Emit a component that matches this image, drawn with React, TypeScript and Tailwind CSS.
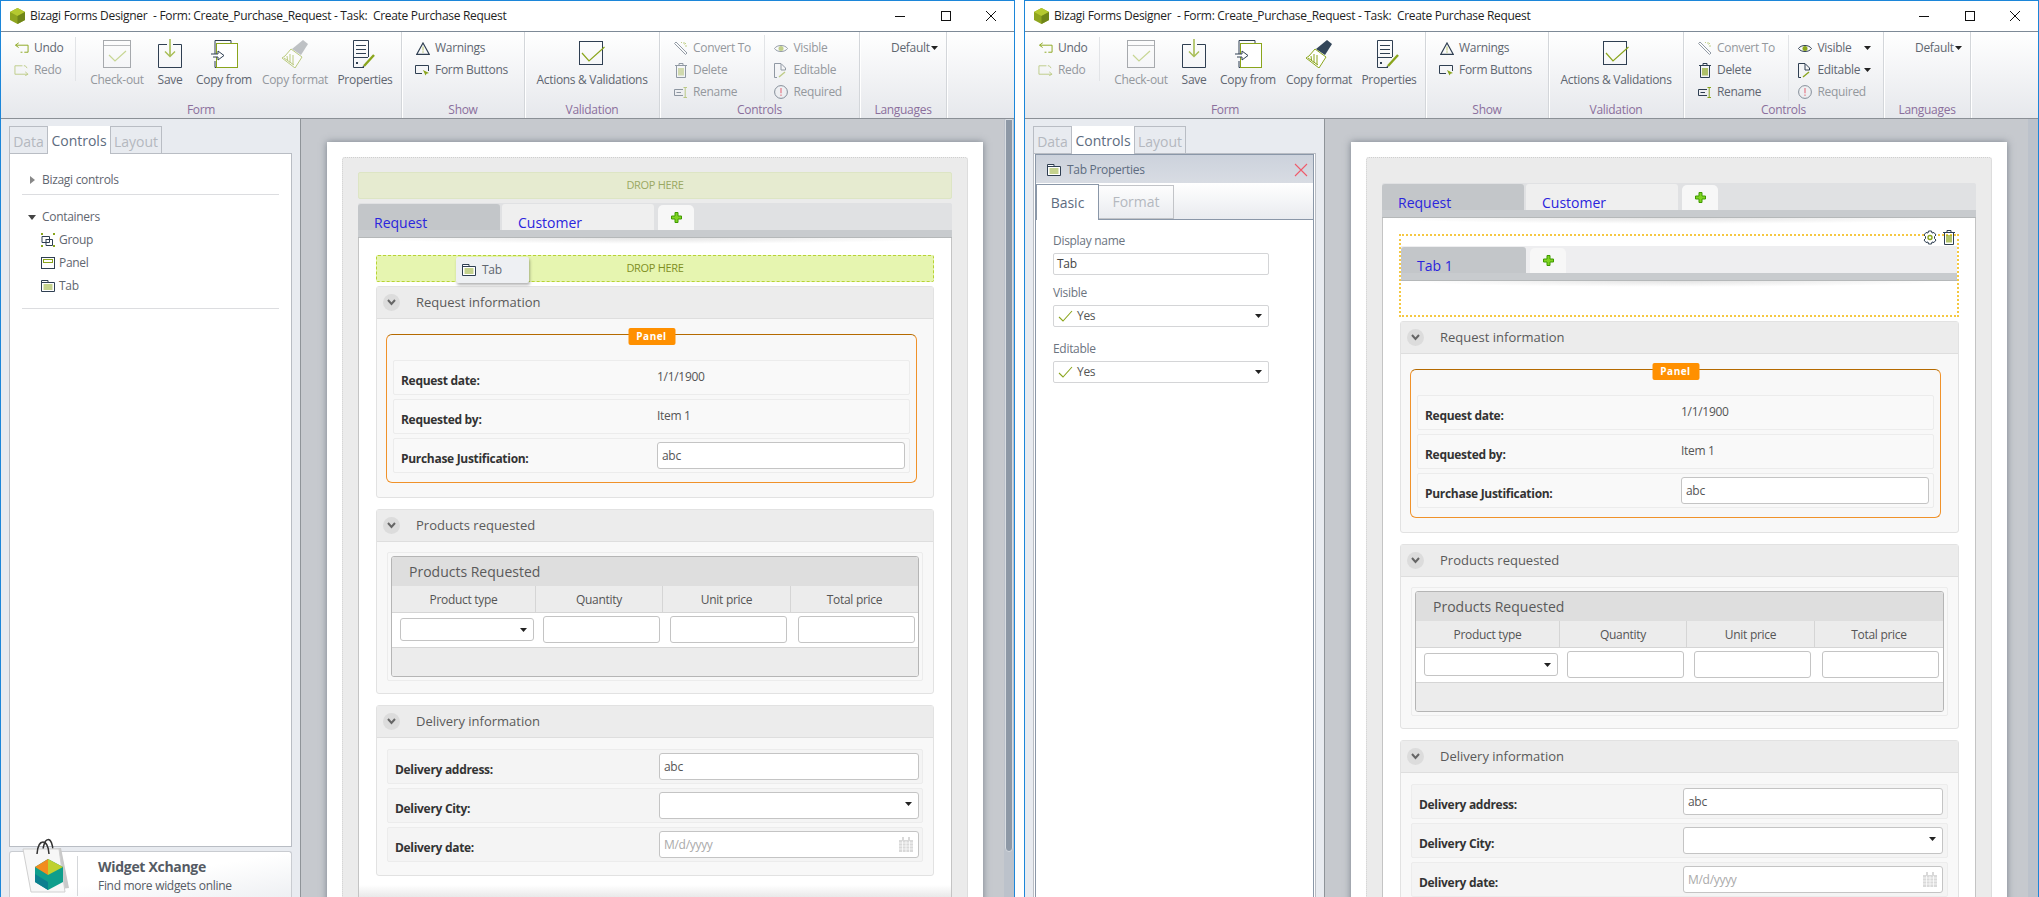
import type { ReactNode } from 'react';

const DARK = '#2f3f52';
const GREEN = '#8aa51c';

type IconProps = { off?: boolean };

const dim = (off?: boolean) => (off ? 'opacity-50' : '');

function Caret({ color = '#222' }: { color?: string }) {
  return (
    <svg width="7" height="4" viewBox="0 0 7 4" className="shrink-0">
      <path d="M0 0H7L3.5 4Z" fill={color} />
    </svg>
  );
}

function Logo() {
  return (
    <svg width="15" height="16" viewBox="0 0 15 16">
      <path d="M7.5 0L15 4V12L7.5 16L0 12V4Z" fill="#8fa51f" />
      <path d="M7.5 0L15 4L7.5 8L0 4Z" fill="#b5c92f" />
      <path d="M7.5 8L15 4V12L7.5 16Z" fill="#6f8518" />
    </svg>
  );
}

function UndoIcon({ off }: IconProps) {
  return (
    <svg width="16" height="12" viewBox="0 0 16 12" fill="none" className={dim(off)}>
      <path d="M2 3H15V10.5H11M9 10.5H7" stroke={GREEN} />
      <path d="M5 .5L1.5 3L5 5.5" stroke={GREEN} />
    </svg>
  );
}

function RedoIcon({ off }: IconProps) {
  return (
    <svg width="16" height="12" viewBox="0 0 16 12" fill="none" className={dim(off)}>
      <path d="M9 1.5H1V10.5H14" stroke={GREEN} />
      <path d="M10.5 1.5H12L14 4" stroke={GREEN} />
      <path d="M12 8L15 10.5L12 12" stroke={GREEN} />
    </svg>
  );
}

function CheckoutIcon() {
  return (
    <svg width="28" height="28" viewBox="0 0 28 28" fill="none">
      <rect x=".5" y=".5" width="27" height="27" stroke="#a6a9ad" />
      <path d="M1 5.5H27" stroke="#b8babd" />
      <path d="M6 15L12 21L23 11" stroke="#c7d694" strokeWidth="1.2" />
    </svg>
  );
}

function SaveIcon() {
  return (
    <svg width="24" height="29" viewBox="0 0 24 29" fill="none">
      <path d="M9 5.5H.5V28.5H23.5V5.5H15" stroke={DARK} />
      <path d="M12 0V17" stroke="#a7bd55" strokeWidth="1.6" />
      <path d="M7 12.5L12 17.5L17 12.5" stroke="#a7bd55" strokeWidth="1.4" />
    </svg>
  );
}

function CopyFromIcon() {
  return (
    <svg width="28" height="28" viewBox="0 0 28 28" fill="none">
      <path d="M5 15V.5H21V4M5 21V27.5H7" stroke={DARK} />
      <rect x="6.5" y="3.5" width="21" height="24" stroke={GREEN} fill="#fff" />
      <path d="M1 14H8V11L14 15.5L8 20V17H3" stroke={DARK} fill="#fff" />
    </svg>
  );
}

function BrushIcon({ off }: IconProps) {
  return (
    <svg width="28" height="28" viewBox="0 0 28 28" fill="none" className={off ? 'opacity-55' : ''}>
      <path d="M22 0L27 4L20 15L11 9Z" fill={off ? '#8d9298' : '#33465a'} />
      <path d="M10 9L21 17L14 28L1 18L4 16Z" fill="#fff" stroke={GREEN} />
      <path d="M3 18L13 25M6 16L6.5 20M9 14L9 22.5M12 15L12 24.5" stroke={GREEN} />
    </svg>
  );
}

function PropertiesIcon() {
  return (
    <svg width="24" height="28" viewBox="0 0 24 28" fill="none">
      <path d="M11 27.5H.5V.5H15.5V17" stroke={DARK} />
      <path d="M3 5.5H13M3 9.5H13M3 13.5H13M1 17.5H15" stroke={DARK} />
      <rect x="3" y="22" width="2" height="2" fill={DARK} />
      <path d="M11 26L21 15" stroke={GREEN} strokeWidth="2.4" />
      <path d="M9.5 27.5L10 25.5L11.5 27Z" fill={DARK} />
    </svg>
  );
}

function WarningIcon() {
  return (
    <svg width="14" height="13" viewBox="0 0 14 13" fill="none">
      <path d="M7 1L13.2 12.3H.8Z" stroke={DARK} strokeWidth="1.2" />
      <path d="M7 4.5V8.5" stroke="#b9c46a" />
      <rect x="6.5" y="9.5" width="1" height="1" fill={GREEN} />
    </svg>
  );
}

function FormButtonsIcon() {
  return (
    <svg width="15" height="11" viewBox="0 0 15 11" fill="none">
      <path d="M7 8.5H.5V.5H13.5V6" stroke={DARK} />
      <path d="M8 5L14 8L11.5 8.7L10.5 10.5Z" fill={GREEN} />
    </svg>
  );
}

function ActionsIcon() {
  return (
    <svg width="26" height="27" viewBox="0 0 26 27" fill="none">
      <rect x=".5" y=".5" width="23" height="23" stroke={DARK} />
      <path d="M3 12L10 20L25.5 6" stroke={GREEN} strokeWidth="1.2" />
    </svg>
  );
}

function WandIcon() {
  return (
    <svg width="14" height="14" viewBox="0 0 14 14" fill="none" className="opacity-50">
      <path d="M2 1L13 12L11.5 13.5L.5 2.5Z" stroke={DARK} />
      <path d="M7 1L8 2M10 1V3M11 5H13M10.5 3.5L12 2" stroke={GREEN} />
    </svg>
  );
}

function TrashIcon({ off }: IconProps) {
  return (
    <svg width="14" height="15" viewBox="0 0 14 15" fill="none" className={dim(off)}>
      <path d="M1 2.5H13M5 2.5V.5H9V2.5M2.5 2.5V14.5H11.5V2.5" stroke={DARK} />
      <path d="M5 5V12.5M7 5V12.5M9 5V12.5" stroke={GREEN} strokeWidth="1.3" />
    </svg>
  );
}

function RenameIcon({ off }: IconProps) {
  return (
    <svg width="14" height="11" viewBox="0 0 14 11" fill="none" className={dim(off)}>
      <path d="M9 2.5H.5V8.5H9" stroke={DARK} />
      <path d="M2.5 5.5H7" stroke={DARK} />
      <path d="M9.5 .5H13M11.2 .5V10.5M9.5 10.5H13" stroke={GREEN} />
    </svg>
  );
}

function EyeIcon({ off }: IconProps) {
  return (
    <svg width="14" height="9" viewBox="0 0 14 9" fill="none" className={dim(off)}>
      <path d="M.5 4.5C3 .5 11 .5 13.5 4.5C11 8.5 3 8.5 .5 4.5Z" stroke={DARK} />
      <circle cx="7" cy="4.5" r="2.5" fill={GREEN} />
    </svg>
  );
}

function EditableIcon({ off }: IconProps) {
  return (
    <svg width="13" height="15" viewBox="0 0 13 15" fill="none" className={dim(off)}>
      <path d="M3 14.5H.5V.5H7L11.5 5V7H7V1" stroke={DARK} />
      <path d="M5 14L11 9" stroke={GREEN} strokeWidth="1.4" />
    </svg>
  );
}

function RequiredIcon() {
  return (
    <svg width="14" height="14" viewBox="0 0 14 14" fill="none" className="opacity-55">
      <circle cx="7" cy="7" r="6.4" stroke={DARK} />
      <path d="M7 3V8.2" stroke="#e0384c" strokeWidth="1.4" />
      <rect x="6.3" y="9.5" width="1.4" height="1.4" fill="#e0384c" />
    </svg>
  );
}

function GroupIcon() {
  return (
    <svg width="14" height="14" viewBox="0 0 14 14" fill="none">
      <path d="M1 3.5H8.5V9.5H1Z" stroke={DARK} />
      <path d="M5 6V12.5H11.5V6.5H5" stroke={DARK} />
      <path d="M0 0H2V2H0ZM12 0H14V2H12ZM0 12H2V14H0ZM12 12H14V14H12Z" fill={GREEN} />
    </svg>
  );
}

function PanelIcon() {
  return (
    <svg width="14" height="12" viewBox="0 0 14 12" fill="none">
      <rect x=".5" y=".5" width="13" height="11" stroke={DARK} />
      <rect x="2.5" y="2.5" width="9" height="3" stroke={GREEN} />
    </svg>
  );
}

function TabIcon() {
  return (
    <svg width="14" height="12" viewBox="0 0 14 12" fill="none">
      <path d="M.5 11.5V.5H7V2.5H13.5V11.5Z" stroke={DARK} fill="#fff" />
      <path d="M.5 2.5H7" stroke={DARK} />
      <path d="M2.5 5H11.5M2.5 7H11.5M2.5 9H11.5" stroke={GREEN} />
    </svg>
  );
}

function CalendarIcon() {
  return (
    <svg width="14" height="15" viewBox="0 0 14 15" fill="#d9d9d9">
      <path d="M0 3H14V15H0Z" />
      <path d="M3 0H5V4H3ZM9 0H11V4H9Z" />
      <path d="M0 6H14M0 9H14M0 12H14M3.5 4V15M7 4V15M10.5 4V15" stroke="#fff" strokeWidth=".7" />
    </svg>
  );
}

function PlusIcon() {
  return (
    <svg width="11" height="11" viewBox="0 0 11 11">
      <path d="M4 .5H7V4H10.5V7H7V10.5H4V7H.5V4H4Z" fill="#7ed321" stroke="#3f9a00" />
    </svg>
  );
}

function Chevron() {
  return (
    <span className="flex h-[17px] w-[17px] items-center justify-center rounded-full bg-[#dcdcdc]">
      <svg width="9" height="7" viewBox="0 0 9 7" fill="none">
        <path d="M1 1L4.5 5L8 1" stroke="#666" strokeWidth="2" />
      </svg>
    </span>
  );
}

function GearIcon() {
  return (
    <svg width="14" height="15" viewBox="0 0 14 15" fill="none">
      <path
        d="M5.5 1H8.5L9 3L11 2.5L13 5L11.5 6.5V8.5L13 10L11 12.5L9 12L8.5 14H5.5L5 12L3 12.5L1 10L2.5 8.5V6.5L1 5L3 2.5L5 3Z"
        stroke={DARK}
        fill="#fff"
      />
      <circle cx="7" cy="7.5" r="2" stroke={GREEN} strokeWidth="1.4" />
    </svg>
  );
}

function BagIcon() {
  return (
    <svg width="50" height="58" viewBox="0 0 50 58" fill="none">
      <path d="M22 16C22 0 32 -1 32 16" stroke="#333" strokeWidth="1.5" />
      <path d="M6 14L40 12L48 52L14 56Z" fill="#c9c9c9" />
      <path d="M2 13H38L44 56H10Z" fill="#f7f7f7" stroke="#d0d0d0" />
      <path d="M16 18C17 2 27 2 28 18" stroke="#333" strokeWidth="1.5" />
      <path d="M27 23L42 31V46L27 54L14 46V31Z" fill="#0e9e8c" />
      <path d="M27 23L14 31L27 39Z" fill="#f28c1e" />
      <path d="M27 23L42 31L27 39Z" fill="#bfd12f" />
      <path d="M14 38L27 46V54L14 46Z" fill="#0b7f8f" />
    </svg>
  );
}

function SmallBtn({ icon, label, off, caret }: { icon: ReactNode; label: string; off?: boolean; caret?: boolean }) {
  return (
    <div className="flex h-[22px] w-full items-center">
      <span className="flex w-[15px] shrink-0 justify-center">{icon}</span>
      <span className={`ml-[5px] whitespace-nowrap text-[12px] ${off ? 'text-[#94989d]' : 'text-[#5f6670]'}`}>{label}</span>
      {caret && (
        <span className="ml-auto">
          <Caret />
        </span>
      )}
    </div>
  );
}

function BigBtn({ icon, label, width, off }: { icon: ReactNode; label: string; width: string; off?: boolean }) {
  return (
    <div className={`flex flex-col items-center ${width}`}>
      <div className="flex h-[36px] items-end">{icon}</div>
      <span className={`mt-[4px] whitespace-nowrap text-[12px] leading-[16px] ${off ? 'text-[#94989d]' : 'text-[#5f6670]'}`}>{label}</span>
    </div>
  );
}

function RibbonGroup({ label, width, children }: { label: string; width: string; children: ReactNode }) {
  return (
    <div className={`flex shrink-0 flex-col border-r border-r-[#d3d6da] shadow-[1px_0_0_#fff] ${width}`}>
      <div className="flex h-[69px] shrink-0">{children}</div>
      <div className="text-center text-[12px] leading-[17px] text-[#8b6f9c]">{label}</div>
    </div>
  );
}

function Ribbon({ active }: { active: boolean }) {
  return (
    <div className="flex h-[88px] shrink-0 border-y border-t-[#7e8a97] border-b-[#8b9096] bg-gradient-to-b from-white to-[#e6e8ec]">
      <RibbonGroup label="Form" width="w-[401px]">
        <div className="mt-[5px] h-[44px] w-[75px] border-r border-r-[#e2e4e7] pl-[13px]">
          <SmallBtn icon={<UndoIcon />} label="Undo" />
          <SmallBtn icon={<RedoIcon off />} label="Redo" off />
        </div>
        <div className="flex pl-[6px]">
          <BigBtn icon={<CheckoutIcon />} label="Check-out" width="w-[70px]" off />
          <BigBtn icon={<SaveIcon />} label="Save" width="w-[36px]" />
          <BigBtn icon={<CopyFromIcon />} label="Copy from" width="w-[72px]" />
          <BigBtn icon={<BrushIcon off={!active} />} label="Copy format" width="w-[70px]" off={!active} />
          <BigBtn icon={<PropertiesIcon />} label="Properties" width="w-[70px]" />
        </div>
      </RibbonGroup>
      <RibbonGroup label="Show" width="w-[123px]">
        <div className="pl-[13px] pt-[5px]">
          <SmallBtn icon={<WarningIcon />} label="Warnings" />
          <SmallBtn icon={<FormButtonsIcon />} label="Form Buttons" />
        </div>
      </RibbonGroup>
      <RibbonGroup label="Validation" width="w-[135px]">
        <div className="flex w-full justify-center">
          <BigBtn icon={<ActionsIcon />} label="Actions & Validations" width="w-[114px]" />
        </div>
      </RibbonGroup>
      <RibbonGroup label="Controls" width="w-[200px]">
        <div className="w-[105px] pl-[13px] pt-[5px]">
          <SmallBtn icon={<WandIcon />} label="Convert To" off />
          <SmallBtn icon={<TrashIcon off={!active} />} label="Delete" off={!active} />
          <SmallBtn icon={<RenameIcon off={!active} />} label="Rename" off={!active} />
        </div>
        <div className="mt-[3px] h-[66px] w-[95px] border-l border-l-[#e2e4e7] pl-[8px] pr-[12px] pt-[2px]">
          <SmallBtn icon={<EyeIcon off={!active} />} label="Visible" off={!active} caret={active} />
          <SmallBtn icon={<EditableIcon off={!active} />} label="Editable" off={!active} caret={active} />
          <SmallBtn icon={<RequiredIcon />} label="Required" off />
        </div>
      </RibbonGroup>
      <RibbonGroup label="Languages" width="w-[87px]">
        <div className="flex h-[22px] items-center gap-[1px] pl-[31px] pt-[10px] text-[12px] text-[#5f6670]">
          Default
          <Caret />
        </div>
      </RibbonGroup>
    </div>
  );
}

function TitleBar() {
  return (
    <div className="flex h-[30px] shrink-0 items-center bg-white">
      <span className="ml-[9px] flex w-[20px] shrink-0">
        <Logo />
      </span>
      <span className="whitespace-pre text-[12px] text-[#1f1f1f]">Bizagi Forms Designer  - Form: Create_Purchase_Request - Task:  Create Purchase Request</span>
      <div className="ml-auto flex">
        <span className="flex h-[30px] w-[46px] items-center justify-center">
          <svg width="10" height="10" viewBox="0 0 10 10"><path d="M0 5.5H10" stroke="#111" /></svg>
        </span>
        <span className="flex h-[30px] w-[45px] items-center justify-center">
          <svg width="10" height="10" viewBox="0 0 10 10" fill="none"><rect x=".5" y=".5" width="9" height="9" stroke="#111" /></svg>
        </span>
        <span className="flex h-[30px] w-[46px] items-center justify-center">
          <svg width="10" height="10" viewBox="0 0 10 10" fill="none"><path d="M0 0L10 10M10 0L0 10" stroke="#111" /></svg>
        </span>
      </div>
    </div>
  );
}

function SideTabs() {
  return (
    <div className="flex h-[27px] shrink-0 text-[14px] leading-[29px] tracking-normal">
      <span className="w-[39px] border border-b-0 border-[#b9bdc4] text-center text-[#b4b8bf]">Data</span>
      <span className="z-10 -mb-px w-[62px] bg-white text-center text-[#5d6c80]">Controls</span>
      <span className="w-[52px] border border-b-0 border-[#b9bdc4] text-center text-[#b4b8bf]">Layout</span>
    </div>
  );
}

function ControlsTree() {
  return (
    <div className="flex flex-col text-[12px] text-[#5f6670]">
      <div className="mx-[12px] flex h-[41px] items-start border-b border-b-[#dcdde0] pl-[8px] pt-[17px]">
        <svg width="5" height="8" viewBox="0 0 5 8" className="mr-[7px] mt-[5px]"><path d="M0 0L5 4L0 8Z" fill="#888" /></svg>
        Bizagi controls
      </div>
      <div className="mx-[12px] border-b border-b-[#dcdde0] pb-[11px] pt-[12px]">
        <div className="mb-[1px] flex h-[20px] items-center pl-[6px]">
          <svg width="8" height="5" viewBox="0 0 8 5" className="mr-[6px]"><path d="M0 0H8L4 5Z" fill="#444" /></svg>
          Containers
        </div>
        {[
          { label: 'Group', icon: <GroupIcon /> },
          { label: 'Panel', icon: <PanelIcon /> },
          { label: 'Tab', icon: <TabIcon /> },
        ].map((item) => (
          <div key={item.label} className="flex h-[23px] items-center gap-[4px] pl-[19px]">
            <span className="flex w-[14px] justify-center">{item.icon}</span>
            {item.label}
          </div>
        ))}
      </div>
    </div>
  );
}

function WidgetXchange() {
  return (
    <div className="relative mt-[4px] flex h-[46px] shrink-0 rounded-t-[3px] border border-b-0 border-[#c9ccd1] bg-gradient-to-br from-white via-white to-[#eef0f3]">
      <span className="absolute -top-[16px] left-[11px]">
        <BagIcon />
      </span>
      <span className="ml-[67px] mt-[4px] h-[40px] border-l border-l-[#d5d7da]" />
      <div className="ml-[20px] flex flex-col pt-[5px] text-[#555b64]">
        <span className="text-[14px] font-bold leading-[20px]">Widget Xchange</span>
        <span className="text-[12px] leading-[17px]">Find more widgets online</span>
      </div>
    </div>
  );
}

function SelectBox({ value }: { value: string }) {
  return (
    <div className="flex h-[22px] w-[216px] items-center rounded-[2px] border border-[#d4d5d7] pl-[4px] pr-[6px] text-[12px] text-[#555]">
      <svg width="15" height="12" viewBox="0 0 15 12" fill="none" className="mr-[4px]">
        <path d="M1 7L5 11L14 1" stroke={GREEN} strokeWidth="1.1" />
      </svg>
      {value}
      <span className="ml-auto">
        <Caret />
      </span>
    </div>
  );
}

function TabProperties() {
  return (
    <div className="mx-[1px] flex min-h-0 flex-1 flex-col border-x border-t border-[#8a97a8] text-[12px]">
      <div className="flex h-[28px] shrink-0 items-center bg-gradient-to-b from-[#ccd2dc] to-[#d8dce3] pl-[11px] pt-[1px] text-[#5d6c80]">
        <TabIcon />
        <span className="ml-[6px]">Tab Properties</span>
        <svg width="14" height="14" viewBox="0 0 14 14" className="ml-auto mr-[5px]" fill="none">
          <path d="M1 1L13 13M13 1L1 13" stroke="#ef5a6a" strokeWidth="1.1" />
        </svg>
      </div>
      <div className="flex h-[37px] shrink-0 items-end border-b border-b-[#8a97a8] bg-gradient-to-b from-white to-[#e9ebef] text-[14px] tracking-normal">
        <span className="-mb-px h-[36px] w-[63px] border-x border-t border-[#8a97a8] bg-white text-center leading-[36px] text-[#5d6c80]">Basic</span>
        <span className="h-[34px] w-[75px] border-y border-r border-[#c2c4c8] text-center leading-[32px] text-[#b4b8bf]">Format</span>
      </div>
      <div className="flex flex-col pl-[17px] text-[#6c7480]">
        <span className="mt-[13px] leading-[16px]">Display name</span>
        <div className="mt-[4px] flex h-[22px] w-[216px] items-center rounded-[2px] border border-[#d4d5d7] pl-[3px] text-[#444]">Tab</div>
        <span className="mt-[10px] leading-[16px]">Visible</span>
        <div className="mt-[4px]"><SelectBox value="Yes" /></div>
        <span className="mt-[14px] leading-[16px]">Editable</span>
        <div className="mt-[4px]"><SelectBox value="Yes" /></div>
      </div>
    </div>
  );
}

function TextBox({ width, value, muted }: { width: string; value: string; muted?: boolean }) {
  return (
    <div className={`flex h-[27px] items-center rounded-[3px] border border-[#c4c4c4] bg-white px-[4px] text-[12px] ${width} ${muted ? 'text-[#aaa]' : 'text-[#555]'}`}>
      {value}
    </div>
  );
}

function DropHere({ children, soft }: { children?: ReactNode; soft?: boolean }) {
  return (
    <div
      className={`relative flex h-[27px] items-center justify-center rounded-[2px] border text-[11px] ${
        soft
          ? 'border-[#dde5c4] bg-[#e6ebd0] text-[#9aa862]'
          : 'border-dashed border-[#b8d334] bg-[#e6f5b0] text-[#7f8f1f]'
      }`}
    >
      DROP HERE
      {children}
    </div>
  );
}

function TabStrip({ tabs, first, small }: { tabs: string[]; first: string; small?: boolean }) {
  return (
    <div>
      <div className={`flex h-[27px] items-end gap-[2px] tracking-normal ${small ? 'bg-[#eeeef0]' : 'rounded-t-[2px] bg-[#e0e1e3]'}`}>
        {tabs.map((tab, i) => (
          <span
            key={tab}
            className={`h-[26px] rounded-t-[3px] text-[14px] leading-[37px] text-[#2a24dd] ${first} ${i === 0 ? 'bg-[#c3c6c9] pl-[16px]' : 'w-[152px] bg-[#efefef] pl-[16px]'}`}
          >
            {tab}
          </span>
        ))}
        <span className="ml-[2px] flex h-[25px] w-[36px] items-center justify-center rounded-t-[5px] bg-[#f7f7f7]">
          <PlusIcon />
        </span>
      </div>
      <div className="h-[8px] border-b border-b-[#b5b8b9] bg-[#c8cbce]" />
      <div className="relative -mb-[6px] h-[6px] bg-[radial-gradient(ellipse_at_top,#e4e4e4,transparent_70%)]" />
    </div>
  );
}

function Section({ title, children }: { title: string; children: ReactNode }) {
  return (
    <div className="rounded-[3px] border border-[#e2e2e2] bg-[#f8f8f8]">
      <div className="flex h-[32px] items-center gap-[16px] border-b border-b-[#dedede] bg-[#ececec] pl-[6px] text-[13px] tracking-normal text-[#5a5a5a]">
        <Chevron />
        {title}
      </div>
      {children}
    </div>
  );
}

function FieldRow({ label, offset, tone, children }: { label: string; offset: string; tone: string; children: ReactNode }) {
  return (
    <div className={`flex h-[35px] rounded-[2px] border border-[#ececec] ${tone}`}>
      <span className={`shrink-0 pl-[7px] pt-[11px] text-[12px] font-bold leading-[18px] text-[#333] ${offset}`}>{label}</span>
      {children}
    </div>
  );
}

function ReadOnlyValue({ value }: { value: string }) {
  return <span className="pt-[7px] text-[12px] leading-[18px] text-[#555]">{value}</span>;
}

function RequestInfo() {
  return (
    <Section title="Request information">
      <div className="relative mb-[14px] ml-[9px] mt-[15px] w-[531px] rounded-[6px] border border-[#f0922a] border-t-[#b56a00] px-[6px] pb-[9px] pt-[25px]">
        <span className="absolute -top-[7px] left-1/2 flex h-[17px] w-[47px] -translate-x-1/2 items-center justify-center rounded-[2px] bg-[#ff9000] text-[10px] font-bold tracking-[0.5px] text-white">
          Panel
        </span>
        <div className="flex flex-col gap-[4px]">
          <FieldRow label="Request date:" offset="w-[263px]" tone="bg-[#f9f9f9]"><ReadOnlyValue value="1/1/1900" /></FieldRow>
          <FieldRow label="Requested by:" offset="w-[263px]" tone="bg-[#f9f9f9]"><ReadOnlyValue value="Item 1" /></FieldRow>
          <FieldRow label="Purchase Justification:" offset="w-[263px]" tone="bg-[#f9f9f9]">
            <div className="pt-[3px]"><TextBox width="w-[248px]" value="abc" /></div>
          </FieldRow>
        </div>
      </div>
    </Section>
  );
}

function ProductsRequested() {
  const columns = ['Product type', 'Quantity', 'Unit price', 'Total price'];
  return (
    <Section title="Products requested">
      <div className="mx-[10px] mb-[12px] mt-[10px] rounded-[2px] border border-[#ececec] p-[3px]">
        <div className="overflow-hidden rounded-[3px] border border-[#b5b5b5]">
          <div className="flex h-[29px] items-center bg-[#dedede] pl-[17px] text-[14px] tracking-normal text-[#5a5a5a]">Products Requested</div>
          <div className="grid h-[27px] grid-cols-[144px_127px_128px_1fr] border-b border-b-[#d5d5d5] bg-[#ececec] text-[12px] text-[#555]">
            {columns.map((col, i) => (
              <span key={col} className={`text-center leading-[27px] ${i < 3 ? 'border-r border-r-[#d5d5d5]' : ''}`}>{col}</span>
            ))}
          </div>
          <div className="grid h-[35px] grid-cols-[144px_127px_128px_1fr] border-b border-b-[#d5d5d5] bg-white pt-[3px]">
            <div className="ml-[8px] mt-[2px] flex h-[23px] w-[134px] items-center justify-end rounded-[3px] border border-[#c4c4c4] pr-[6px]">
              <Caret />
            </div>
            <div className="pl-[7px]"><TextBox width="w-[117px]" value="" /></div>
            <div className="pl-[7px]"><TextBox width="w-[117px]" value="" /></div>
            <div className="pl-[7px]"><TextBox width="w-[117px]" value="" /></div>
          </div>
          <div className="h-[28px] bg-[#ececec]" />
        </div>
      </div>
    </Section>
  );
}

function DeliveryInfo() {
  return (
    <Section title="Delivery information">
      <div className="mx-[10px] mb-[13px] mt-[11px] flex flex-col gap-[4px]">
        <FieldRow label="Delivery address:" offset="w-[271px]" tone="bg-[#f4f4f4]">
          <div className="pt-[3px]"><TextBox width="w-[260px]" value="abc" /></div>
        </FieldRow>
        <FieldRow label="Delivery City:" offset="w-[271px]" tone="bg-[#f4f4f4]">
          <div className="pt-[3px]">
            <div className="flex h-[27px] w-[260px] justify-end rounded-[3px] border border-[#c4c4c4] bg-white pr-[6px] pt-[9px]">
              <Caret />
            </div>
          </div>
        </FieldRow>
        <FieldRow label="Delivery date:" offset="w-[271px]" tone="bg-[#f4f4f4]">
          <div className="pt-[3px]">
            <div className="flex h-[27px] w-[260px] items-center justify-between rounded-[3px] border border-[#c4c4c4] bg-white pl-[4px] pr-[5px] text-[12px] text-[#aaa]">
              M/d/yyyy
              <CalendarIcon />
            </div>
          </div>
        </FieldRow>
      </div>
    </Section>
  );
}

function DragForm() {
  return (
    <>
      <DropHere soft />
      <div className="mt-[4px]">
        <TabStrip tabs={['Request', 'Customer']} first="min-w-[142px]" />
        <div className="border-x border-x-[#c4c4c4] bg-white px-[17px] pb-[9px] pt-[17px]">
          <DropHere>
            <div className="absolute left-[79px] top-[1px] flex h-[26px] w-[73px] items-center gap-[6px] rounded-[2px] bg-[#eef0f3] pl-[6px] text-[12px] text-[#5f6670] shadow-[1px_2px_3px_rgba(0,0,0,0.3)]">
              <TabIcon />
              Tab
            </div>
          </DropHere>
          <div className="mt-[4px] flex flex-col gap-[11px]">
            <RequestInfo />
            <ProductsRequested />
            <DeliveryInfo />
          </div>
        </div>
        <div className="h-[12px] border-x border-x-[#c4c4c4] bg-gradient-to-b from-white to-[#e9e9e9]" />
      </div>
    </>
  );
}

function TabForm() {
  return (
    <div className="mt-[11px]">
      <TabStrip tabs={['Request', 'Customer']} first="min-w-[142px]" />
      <div className="border-x border-x-[#c4c4c4] bg-white px-[16px] pt-[16px]">
        <div className="relative h-[83px] border-2 border-dotted border-[#f5c842]">
          <div className="absolute -top-[6px] right-[1px] flex items-center gap-[5px]">
            <GearIcon />
            <TrashIcon />
          </div>
          <div className="pt-[10px]">
            <TabStrip tabs={['Tab 1']} first="min-w-[125px]" small />
          </div>
        </div>
        <div className="ml-[1px] mt-[4px] flex flex-col gap-[11px]">
          <RequestInfo />
          <ProductsRequested />
          <DeliveryInfo />
        </div>
      </div>
    </div>
  );
}

function Window({ variant }: { variant: 'drag' | 'props' }) {
  const drag = variant === 'drag';
  return (
    <div className="flex h-full w-[1015px] shrink-0 flex-col border-x border-t border-[#1c86d9]">
      <TitleBar />
      <Ribbon active={!drag} />
      <div className="flex min-h-0 flex-1">
        <aside className="flex w-[300px] shrink-0 flex-col border-r border-r-[#8f9499] bg-[#e8ebf0] pl-[8px] pr-[8px] pt-[7px]">
          <SideTabs />
          <div className={`flex min-h-0 flex-1 flex-col border border-[#b9bdc4] bg-white ${drag ? '' : 'border-b-0'}`}>
            {drag ? <ControlsTree /> : <TabProperties />}
          </div>
          {drag && <WidgetXchange />}
        </aside>
        <main className="flex min-w-0 flex-1 overflow-hidden bg-[#c6c9ce]">
          <div className="min-w-0 flex-1 overflow-hidden pl-[26px] pt-[23px]">
            <div className="h-[1000px] w-[656px] bg-white px-[15px] pt-[15px] shadow-[0_0_7px_rgba(70,80,95,0.6)]">
              <div className="h-full rounded-[3px] border border-dotted border-[#cfcfcf] bg-[#ebebeb] px-[15px] pt-[14px]">
                {drag ? <DragForm /> : <TabForm />}
              </div>
            </div>
          </div>
          <div className="w-[10px] shrink-0 bg-[#bcc2cb] pl-px">
            {drag && <div className="h-[733px] w-[8px] rounded-b-[4px] border border-[#d8dce1] bg-[#8d98a6]" />}
          </div>
        </main>
      </div>
    </div>
  );
}

export default function App() {
  return (
    <div className="flex h-[897px] w-[2039px] gap-[9px] overflow-hidden bg-white font-['Open_Sans',sans-serif] tracking-[-0.3px]">
      <Window variant="drag" />
      <Window variant="props" />
    </div>
  );
}
